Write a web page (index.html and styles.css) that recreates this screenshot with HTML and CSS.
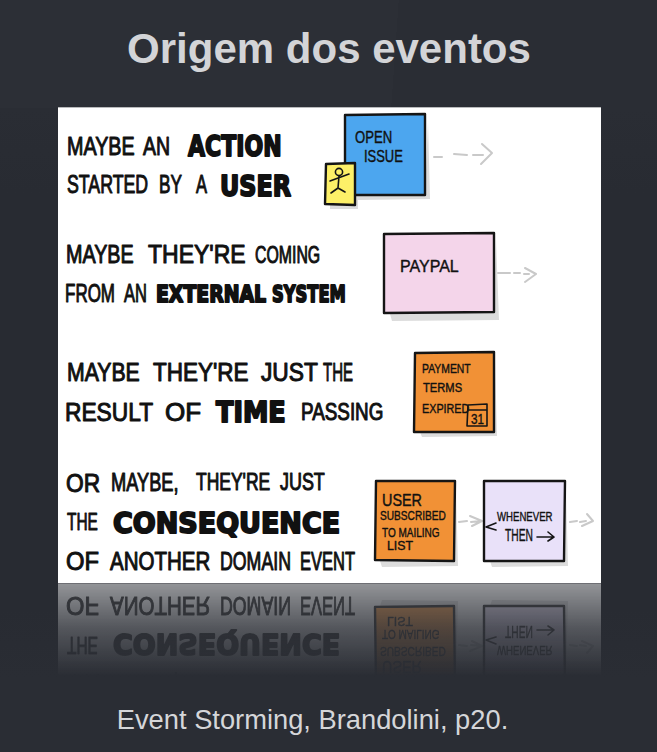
FILE: index.html
```html
<!DOCTYPE html>
<html lang="pt">
<head>
    <meta charset="UTF-8">
    <meta name="viewport" content="width=device-width, initial-scale=1.0">
    <title>Origem dos eventos</title>
    <link rel="stylesheet" href="styles.css">
</head>
<body>
    <div class="slide">
        <h1>Origem dos eventos</h1>
        <div class="sketch">
            <svg class="sketch-art" viewBox="58 108 543 475" width="543" height="475">
                <g id="art">
                    <!-- sentences -->
                    <text class="hand" transform="translate(67 155) scale(.79 1)">MAYBE</text>
                    <text class="hand" transform="translate(143 155) scale(.78 1)">AN</text>
                    <text class="marker big" transform="translate(188 156) scale(.76 1)">ACTION</text>
                    <text class="hand" transform="translate(67 193) scale(.71 1)">STARTED</text>
                    <text class="hand" transform="translate(159 193) scale(.69 1)">BY</text>
                    <text class="hand" transform="translate(196 193) scale(.66 1)">A</text>
                    <text class="marker big" transform="translate(220 196) scale(.82 1)">USER</text>

                    <text class="hand" transform="translate(66 263) scale(.79 1)">MAYBE</text>
                    <text class="hand" transform="translate(148 263) scale(.92 1)">THEY'RE</text>
                    <text class="hand small" transform="translate(255 263) scale(.69 1)">COMING</text>
                    <text class="hand" transform="translate(65 302) scale(.68 1)">FROM</text>
                    <text class="hand" transform="translate(124 302) scale(.66 1)">AN</text>
                    <text class="marker" transform="translate(156 302) scale(.82 1)">EXTERNAL</text>
                    <text class="marker" transform="translate(272 302) scale(.71 1)">SYSTEM</text>

                    <text class="hand" transform="translate(67 381) scale(.85 1)">MAYBE</text>
                    <text class="hand" transform="translate(153 381) scale(.9 1)">THEY'RE</text>
                    <text class="hand" transform="translate(261 381) scale(.91 1)">JUST</text>
                    <text class="hand" transform="translate(323 381) scale(.6 1)">THE</text>
                    <text class="hand" transform="translate(65 421) scale(.91 1)">RESULT</text>
                    <text class="hand" transform="translate(165 421) scale(1.04 1)">OF</text>
                    <text class="marker big" transform="translate(216 422) scale(.88 1)">TIME</text>
                    <text class="hand small" transform="translate(301 420) scale(.82 1)">PASSING</text>

                    <text class="hand" transform="translate(66 492) scale(.91 1)">OR</text>
                    <text class="hand" transform="translate(111 491) scale(.73 1)">MAYBE,</text>
                    <text class="hand small" transform="translate(196 490) scale(.76 1)">THEY'RE</text>
                    <text class="hand small" transform="translate(280 490) scale(.78 1)">JUST</text>
                    <text class="hand small" transform="translate(67 530) scale(.67 1)">THE</text>
                    <text class="marker big" transform="translate(113 533) scale(.93 1)">CONSEQUENCE</text>
                    <text class="hand" transform="translate(66 570) scale(.95 1)">OF</text>
                    <text class="hand" transform="translate(110 570) scale(.82 1)">ANOTHER</text>
                    <text class="hand" transform="translate(220 570) scale(.71 1)">DOMAIN</text>
                    <text class="hand" transform="translate(300 570) scale(.66 1)">EVENT</text>

                    <!-- open issue + actor -->
                    <path class="shadow" d="M428 122 L430 199 L358 200 L358 209 L330 209 L330 205 L355 195 L425 195Z"/>
                    <path class="note blue" d="M345 115 L425 114 L425 195 L355 195 L345 193Z"/>
                    <text class="note-text" transform="translate(355 143) scale(.82 1)">OPEN</text>
                    <text class="note-text" transform="translate(364 162) scale(.81 1)">ISSUE</text>
                    <path class="note yellow" d="M326 164 L355 163 L355 205 L325 204Z"/>
                    <circle class="ink" cx="339" cy="172" r="3.6"/>
                    <path class="ink" d="M339 176 L338 188 M330 181 L349 174 M338 188 L331 193 M338 188 L345 192"/>
                    <path class="arrow" d="M434 157 L442 157 M454 154 L467 155 M473 155 L483 155 M482 144 L492 153 L481 164"/>

                    <!-- paypal -->
                    <path class="shadow" d="M496 240 L499 320 L392 321 L390 314 L494 312Z"/>
                    <path class="note pink" d="M384 234 L494 233 L494 312 L384 313Z"/>
                    <text class="note-text" transform="translate(400 272)">PAYPAL</text>
                    <path class="arrow" d="M498 273 L510 273 M514 273 L520 273 M524 274 L529 274 M525 268 L536 274 L525 282"/>

                    <!-- time trigger -->
                    <path class="shadow" d="M495 360 L497 436 L422 437 L420 432 L494 432Z"/>
                    <path class="note orange" d="M415 353 L494 352 L494 432 L414 432Z"/>
                    <text class="note-text tiny" transform="translate(422 373) scale(.8 1)">PAYMENT</text>
                    <text class="note-text tiny" transform="translate(423 392) scale(.86 1)">TERMS</text>
                    <text class="note-text tiny" transform="translate(422 413) scale(.83 1)">EXPIRED</text>
                    <path class="ink" d="M468 405 L487 404 L487 426 L467 426Z M468 410 L487 410"/>
                    <text class="note-text cal" transform="translate(471 424) scale(.78 1)">31</text>

                    <!-- subscribed event -->
                    <path class="shadow" d="M456 490 L458 566 L382 567 L380 561 L455 561Z"/>
                    <path class="note orange" d="M376 481 L455 481 L454 561 L375 560Z"/>
                    <text class="note-text" transform="translate(382 506) scale(.9 1)">USER</text>
                    <text class="note-text tiny" transform="translate(380 520) scale(.78 1)">SUBSCRIBED</text>
                    <text class="note-text tiny" transform="translate(382 537) scale(.77 1)">TO MAILING</text>
                    <text class="note-text tiny" transform="translate(387 550) scale(.95 1)">LIST</text>
                    <path class="arrow" d="M459 522 L467 521 M470 516 L482 521 L472 526 M471 522 L481 521"/>

                    <!-- policy -->
                    <path class="shadow" d="M566 490 L568 566 L492 567 L490 561 L565 561Z"/>
                    <path class="note lilac" d="M484 481 L565 481 L564 561 L484 561Z"/>
                    <text class="note-text tiny" transform="translate(497 521) scale(.74 1)">WHENEVER</text>
                    <text class="note-text" transform="translate(505 541) scale(.64 1)">THEN</text>
                    <path class="ink" d="M537 537 L554 537 M548 532 L554 537 L548 541 M496 523 L486 527 L496 530"/>
                    <path class="arrow" d="M570 522 L577 521 M580 522 L586 521 M587 514 L593 521 L582 526"/>
                </g>
            </svg>
        </div>
        <div class="reflection">
            <svg class="reflection-art" viewBox="58 483 543 100" width="543" height="100">
                <use href="#art"/>
            </svg>
        </div>
        <p class="caption">Event Storming, Brandolini, p20.</p>
    </div>
</body>
</html>
```

FILE: styles.css
```css
body {
    margin: 0;
    font-family: "Liberation Sans", Arial, sans-serif;
    background-color: #2a2d34;
    background-image:
        linear-gradient(94deg, #2c2f36 0, #2c2f36 60%, rgba(42,45,52,0) 60%),
        linear-gradient(to bottom, rgba(40,43,50,0) 0, #282b32 15%, #282b32 88%, rgba(40,43,50,0) 100%);
    background-repeat: no-repeat;
    background-size: 100% 108px, 100% 570px;
    background-position: 0 0, 0 108px;
}
.slide {
    box-sizing: border-box;
    height: 752px;
    padding-left: 1px;
    display: flex;
    flex-direction: column;
    align-items: center;
    overflow: hidden;
}
h1 {
    margin: 24px 0 0;
    height: 84px;
    font-size: 42px;
    line-height: 50px;
    font-weight: bold;
    color: #d3d4d7;
}
.sketch {
    width: 543px;
    height: 475px;
    background: #fff;
    box-shadow: 0 -1px 0 #b9babc;
}
.sketch-art {
    display: block;
}
.reflection {
    width: 543px;
    height: 100px;
    border-top: 1px solid #b4b5b7;
    overflow: hidden;
    background: #fff;
    -webkit-mask-image: linear-gradient(to bottom, rgba(0,0,0,0.5), rgba(0,0,0,0.2) 45%, rgba(0,0,0,0) 92%);
    mask-image: linear-gradient(to bottom, rgba(0,0,0,0.5), rgba(0,0,0,0.2) 45%, rgba(0,0,0,0) 92%);
}
.reflection-art {
    display: block;
    opacity: 0.78;
    transform: scaleY(-1);
}
.caption {
    margin: 20px 33px 0 0;
    font-size: 27.3px;
    line-height: 32px;
    color: #d5d6d9;
}

/* hand lettering on the sketch */
.hand, .marker, .note-text {
    fill: #111;
    stroke: #111;
    stroke-linejoin: round;
    stroke-linecap: round;
}
.hand {
    font: 25px "Liberation Sans", sans-serif;
    stroke-width: 1px;
}
.hand.small {
    font-size: 23px;
}
.marker {
    font: bold 23px "DejaVu Sans", sans-serif;
    stroke-width: 2px;
}
.marker.big {
    font-size: 29px;
}
.note-text {
    font: 16px "Liberation Sans", sans-serif;
    stroke-width: 0.4px;
}
.note-text.tiny {
    font-size: 13px;
}
.note-text.cal {
    font-size: 15px;
}
.note {
    stroke: #151515;
    stroke-width: 2.4px;
    stroke-linejoin: round;
}
.blue { fill: #4ca6ef; }
.yellow { fill: #fdf068; }
.pink { fill: #f4d5ea; }
.orange { fill: #f19136; }
.lilac { fill: #e9e1f9; }
.shadow {
    fill: #dcdcdc;
}
.ink {
    fill: none;
    stroke: #151515;
    stroke-width: 1.6px;
    stroke-linecap: round;
    stroke-linejoin: round;
}
.arrow {
    fill: none;
    stroke: #c9c9c9;
    stroke-width: 2px;
    stroke-linecap: round;
    stroke-linejoin: round;
}
```
